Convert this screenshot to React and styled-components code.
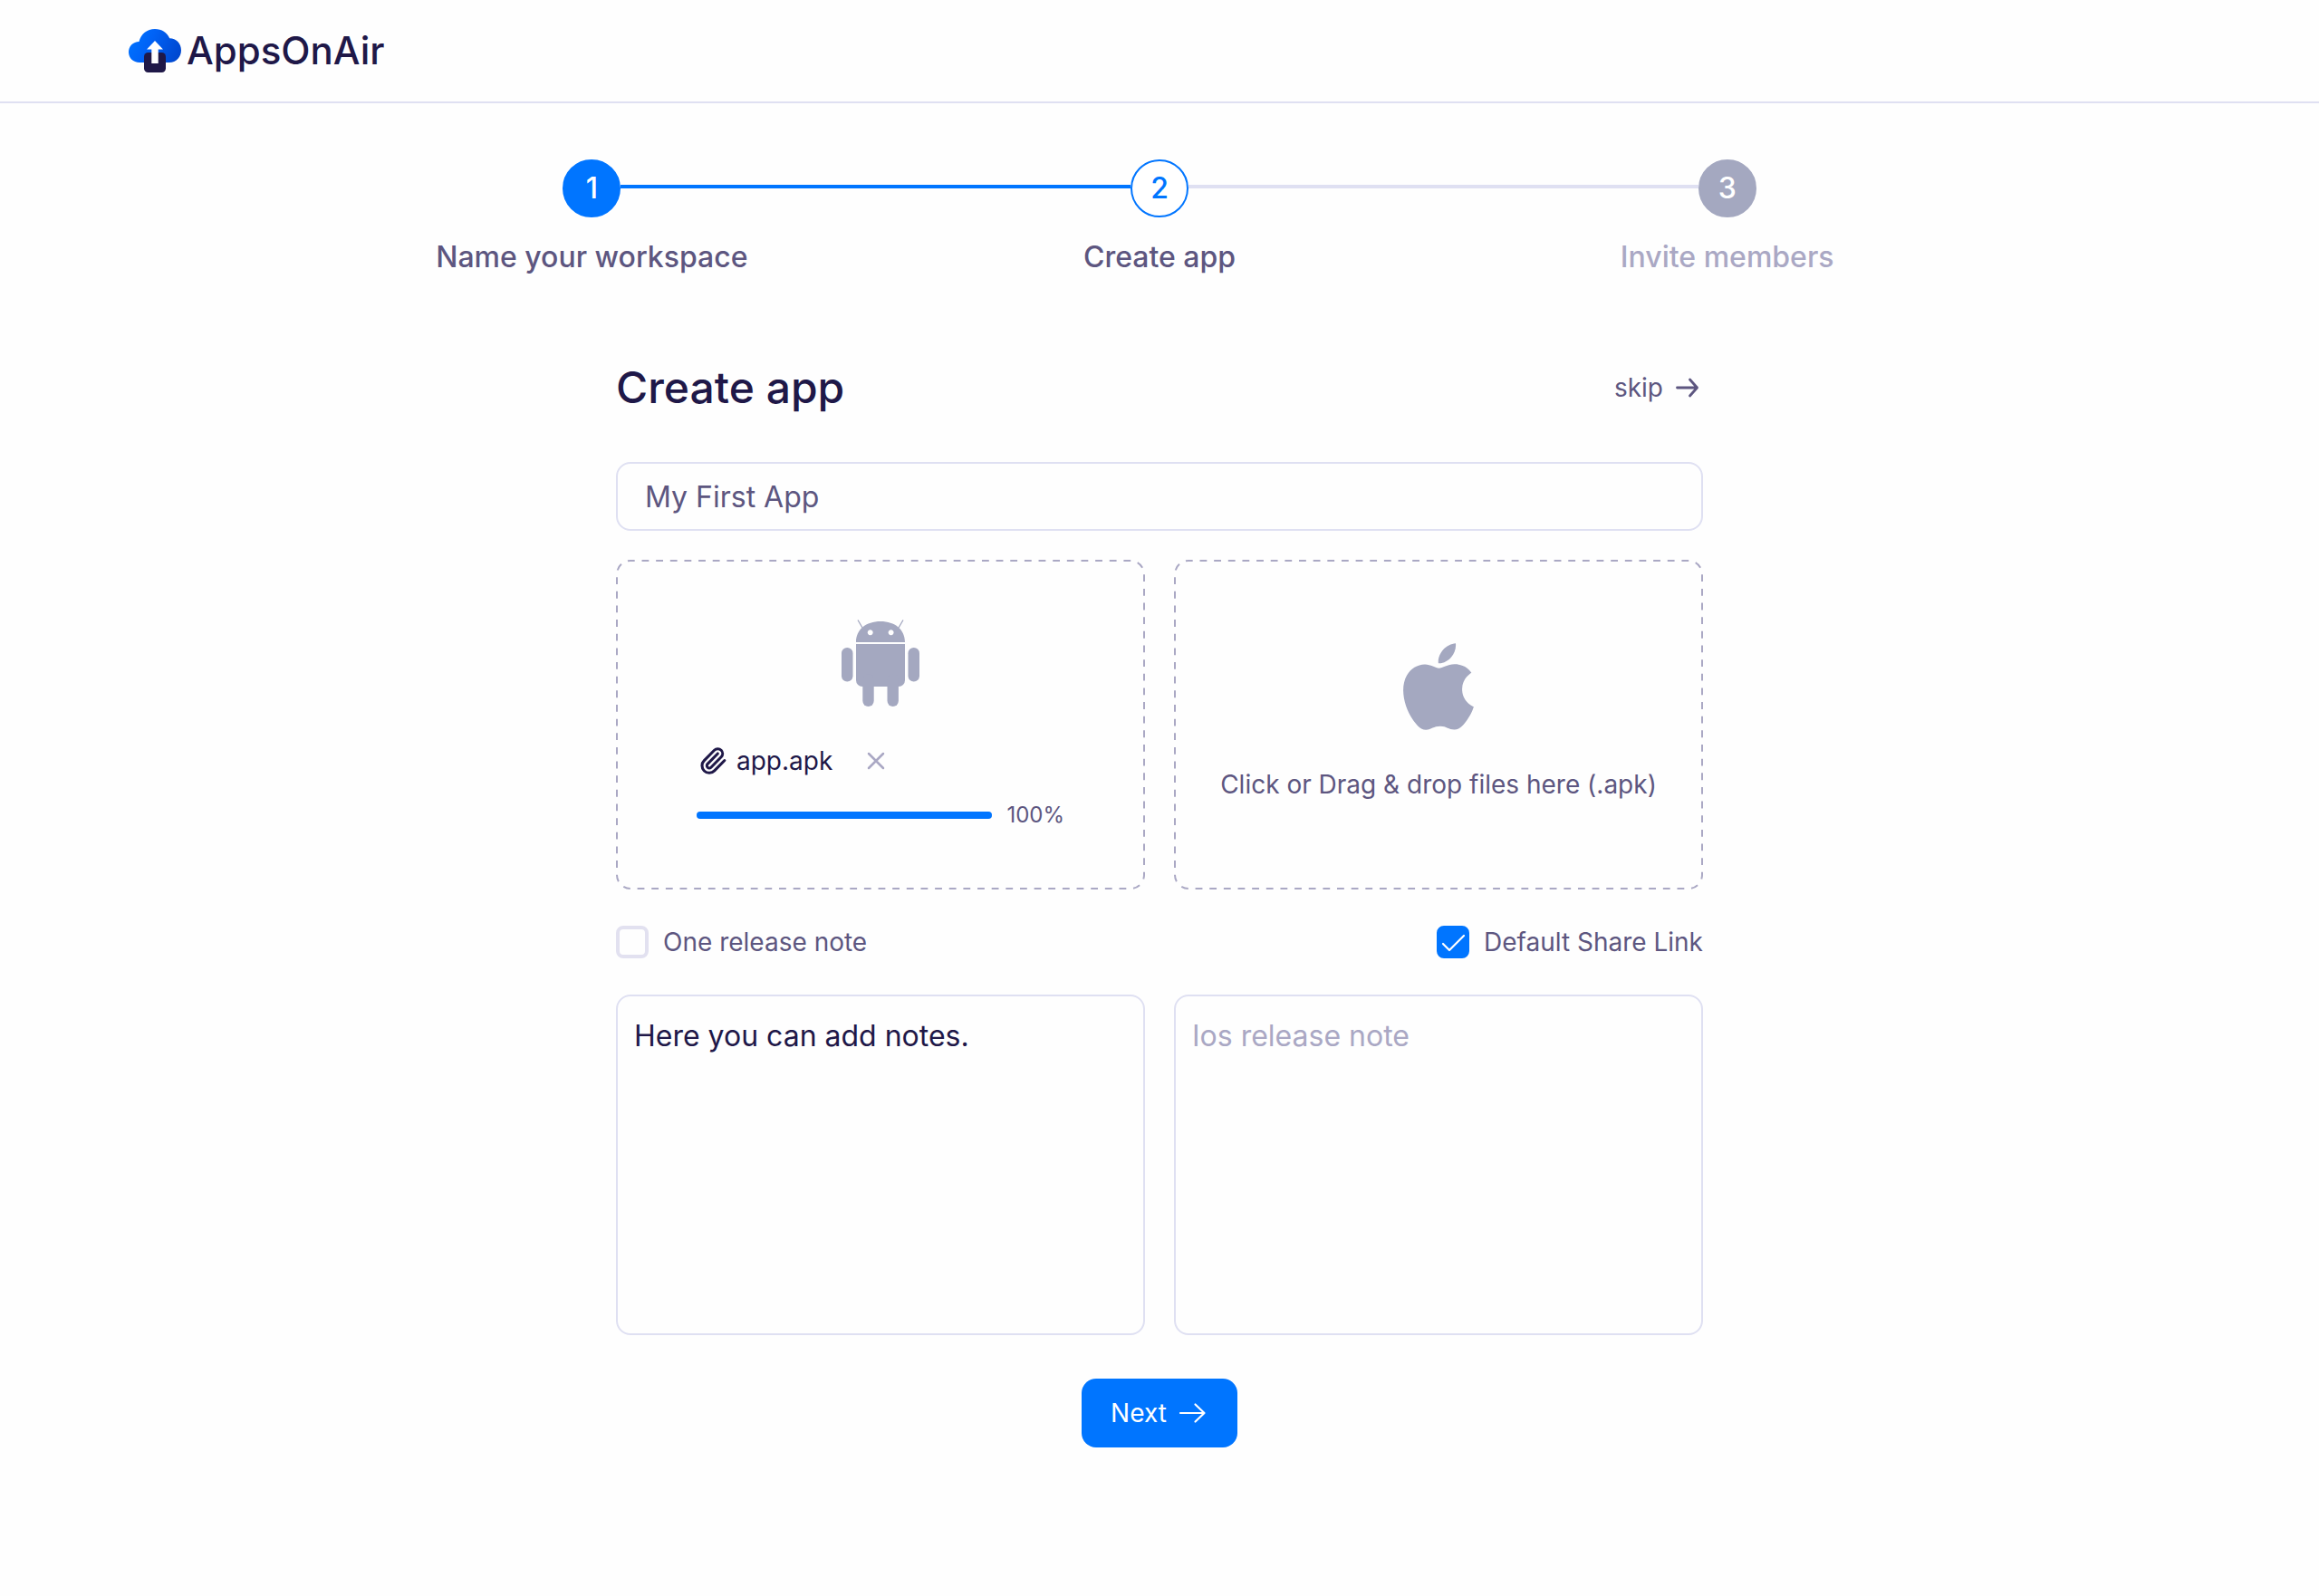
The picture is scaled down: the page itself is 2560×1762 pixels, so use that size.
import React, { useState } from "react";
import styled, { createGlobalStyle } from "styled-components";

const color = {
  page: "#fefefe",
  ink: "#1f1848",
  text: "#5d5680",
  faint: "#aaa8c4",
  grey: "#a4a8c0",
  line: "#dfe0f2",
  blue: "#0075ff",
};

const GlobalStyle = createGlobalStyle`
  *, *::before, *::after { box-sizing: border-box; }
  body {
    margin: 0;
    background: ${color.page};
    color: ${color.text};
    font-family: Inter, "Liberation Sans", sans-serif;
    font-size: 28px;
    line-height: 40px;
  }
  button, input, textarea { font: inherit; color: inherit; }
`;

const Header = styled.header`
  display: flex;
  align-items: center;
  height: 114px;
  padding: 0 142px;
  border-bottom: 2px solid ${color.line};
`;

const Brand = styled.a`
  display: flex;
  align-items: center;
  gap: 6px;
  color: ${color.ink};
  font-size: 42px;
  font-weight: 500;
  text-decoration: none;
`;

const Main = styled.main`
  display: flex;
  flex-direction: column;
  align-items: center;
  padding: 62px 32px;
`;

const Steps = styled.ol`
  display: grid;
  grid-template-columns: repeat(3, 1fr);
  width: 100%;
  max-width: 1880px;
  margin: 0;
  padding: 0;
  list-style: none;
`;

const StepItem = styled.li`
  display: flex;
  flex-direction: column;
  gap: 24px;
  text-align: center;
`;

const StepTrack = styled.div`
  display: flex;
`;

const StepLine = styled.span`
  flex: 1;
  height: 4px;
  margin-top: 28px;
  background: ${(p) => p.$color};
`;

const stepLook = {
  done: { bg: color.blue, fg: "#fff", edge: color.blue, label: color.text },
  current: { bg: "#fff", fg: color.blue, edge: color.blue, label: color.text },
  upcoming: { bg: color.grey, fg: "#fff", edge: color.grey, label: color.faint },
};

const StepCircle = styled.span`
  display: flex;
  align-items: center;
  justify-content: center;
  width: 64px;
  height: 64px;
  border: 2px solid ${(p) => stepLook[p.$state].edge};
  border-radius: 50%;
  background: ${(p) => stepLook[p.$state].bg};
  color: ${(p) => stepLook[p.$state].fg};
  font-size: 32px;
  font-weight: 500;
`;

const StepLabel = styled.span`
  color: ${(p) => stepLook[p.$state].label};
  font-size: 32px;
  font-weight: 500;
`;

const Form = styled.form`
  display: flex;
  flex-direction: column;
  width: 100%;
  max-width: 1200px;
  margin-top: 94px;
`;

const TitleRow = styled.div`
  display: flex;
  align-items: center;
  justify-content: space-between;
  margin-bottom: 52px;
`;

const Title = styled.h1`
  margin: 0;
  color: ${color.ink};
  font-size: 48px;
  font-weight: 500;
  line-height: 60px;
`;

const SkipLink = styled.a`
  display: flex;
  align-items: center;
  gap: 12px;
  color: inherit;
  text-decoration: none;
`;

const NameInput = styled.input`
  width: 100%;
  height: 76px;
  padding: 0 30px;
  border: 2px solid ${color.line};
  border-radius: 16px;
  background: transparent;
  font-size: 32px;
  outline: none;
`;

const Columns = styled.div`
  display: grid;
  grid-template-columns: 1fr 1fr;
  gap: 32px;
`;

const UploadColumns = styled(Columns)`
  margin: 32px 0 40px;
`;

const DropZone = styled.div`
  position: relative;
  display: flex;
  flex-direction: column;
  align-items: center;
  justify-content: center;
  gap: 40px;
  height: 364px;
  padding: ${(p) => (p.$filled ? "4px 0 0" : "0 0 4px")};
`;

const DashedOutline = styled.svg`
  position: absolute;
  inset: 0;
  width: 100%;
  height: 100%;
  pointer-events: none;
  rect {
    x: 1px;
    y: 1px;
    width: calc(100% - 2px);
    height: calc(100% - 2px);
    rx: 15px;
    fill: none;
    stroke: ${color.faint};
    stroke-width: 2px;
  }
`;

const HiddenInput = styled.input`
  position: absolute;
  width: 1px;
  height: 1px;
  opacity: 0;
`;

const UploadedFile = styled.div`
  display: flex;
  flex-direction: column;
  gap: 20px;
  width: 406px;
`;

const FileRow = styled.div`
  display: flex;
  align-items: center;
  padding-left: 2px;
  color: ${color.ink};
`;

const FileName = styled.span`
  margin: 0 34px 0 10px;
`;

const IconButton = styled.button`
  display: flex;
  padding: 4px;
  border: 0;
  background: none;
  color: ${color.faint};
  cursor: pointer;
`;

const ProgressRow = styled.div`
  display: flex;
  align-items: center;
  gap: 16px;
  font-size: 24px;
  line-height: 40px;
`;

const Progress = styled.progress`
  flex: 1;
  height: 8px;
  border: 0;
  appearance: none;
  &::-webkit-progress-bar { background: ${color.line}; border-radius: 4px; }
  &::-webkit-progress-value { background: ${color.blue}; border-radius: 4px; }
`;

const OptionsRow = styled.div`
  display: flex;
  align-items: center;
  justify-content: space-between;
  height: 36px;
  margin-bottom: 40px;
`;

const CheckLabel = styled.label`
  display: flex;
  align-items: center;
  gap: 16px;
`;

const CheckHolder = styled.span`
  display: grid;
  > * { grid-area: 1 / 1; }
  > svg { pointer-events: none; }
`;

const Checkbox = styled.input`
  width: 36px;
  height: 36px;
  margin: 0;
  border: 4px solid #e2e1f0;
  border-radius: 8px;
  appearance: none;
  &:checked { border-color: ${color.blue}; background: ${color.blue}; }
  &:not(:checked) + svg { visibility: hidden; }
`;

const Notes = styled.textarea`
  width: 100%;
  height: 376px;
  padding: 24px 18px;
  border: 2px solid ${color.line};
  border-radius: 16px;
  background: transparent;
  color: ${color.ink};
  font-size: 32px;
  outline: none;
  resize: none;
  &::placeholder { color: ${color.faint}; opacity: 1; }
`;

const NextButton = styled.button`
  display: flex;
  align-items: center;
  align-self: center;
  gap: 12px;
  height: 76px;
  margin-top: 48px;
  padding: 0 32px;
  border: 0;
  border-radius: 16px;
  background: ${color.blue};
  color: #fff;
  cursor: pointer;
`;

function LogoMark() {
  return (
    <svg width="58" height="48" viewBox="0 0 58 48" aria-hidden="true">
      <defs>
        <linearGradient id="cloud" x1="0" y1="0.3" x2="1" y2="0.6">
          <stop offset="0" stopColor="#0072ff" />
          <stop offset="0.4" stopColor="#0062f6" />
          <stop offset="1" stopColor="#0048d0" />
        </linearGradient>
      </defs>
      <path
        d="M12 37C5 37 0 32 0 25.500C0 19 5 14 11.500 14C13.500 5.500 20.500 0 29 0C36.500 0 42.500 4 45.200 10.200C52.500 10.200 58 16 58 23.500C58 31 52.500 37 45 37Z"
        fill="url(#cloud)"
      />
      <rect x="17" y="26" width="24" height="22" rx="4.500" fill={color.ink} />
      <path d="M29 13L38 22.500H32.700V38H25.300V22.500H20Z" fill="#fff" />
    </svg>
  );
}

function AndroidIcon() {
  return (
    <svg width="86" height="96" viewBox="0 0 86 96" fill={color.grey} aria-hidden="true">
      <path d="M18 0.500L23 9M68 0.500L63 9" stroke={color.grey} strokeWidth="1.300" />
      <path
        fillRule="evenodd"
        d="M16 25C16 11 27 2 43 2C59 2 70 11 70 25ZM31.700 11.200a3 3 0 1 0 0.010 0ZM54.600 11.200a3 3 0 1 0 0.010 0Z"
      />
      <path d="M16 27H70V67a7 7 0 0 1-7 7H23a7 7 0 0 1-7-7Z" />
      <rect x="0" y="31" width="12.500" height="37.500" rx="6.200" />
      <rect x="73.500" y="31" width="12.500" height="37.500" rx="6.200" />
      <rect x="23.300" y="60" width="12.400" height="36" rx="6.200" />
      <rect x="50.500" y="60" width="12.400" height="36" rx="6.200" />
    </svg>
  );
}

function AppleIcon() {
  return (
    <svg width="78" height="96" viewBox="2.200 0 19.600 24" fill={color.grey} aria-hidden="true">
      <path d="M12.152 6.896c-.948 0-2.415-1.078-3.960-1.040-2.040.027-3.910 1.183-4.961 3.014-2.117 3.675-.546 9.103 1.519 12.090 1.013 1.454 2.208 3.090 3.792 3.039 1.520-.065 2.090-.987 3.935-.987 1.831 0 2.350.987 3.960.948 1.637-.026 2.676-1.480 3.676-2.948 1.156-1.688 1.636-3.325 1.662-3.415-.039-.013-3.182-1.221-3.220-4.857-.026-3.040 2.480-4.494 2.597-4.559-1.429-2.090-3.623-2.324-4.390-2.376-2-.156-3.675 1.090-4.610 1.090zM15.530 3.830c.843-1.012 1.400-2.427 1.245-3.830-1.207.052-2.662.805-3.532 1.818-.780.896-1.454 2.338-1.273 3.714 1.338.104 2.715-.688 3.559-1.701" />
    </svg>
  );
}

function ClipIcon() {
  return (
    <svg width="32" height="32" viewBox="0 0 24 24" fill="none" stroke="currentColor" strokeWidth="2.300" strokeLinecap="round" strokeLinejoin="round" aria-hidden="true">
      <path d="m16 6-8.414 8.586a2 2 0 0 0 2.829 2.829l8.414-8.586a4 4 0 1 0-5.657-5.657l-8.379 8.551a6 6 0 1 0 8.485 8.485l8.379-8.551" />
    </svg>
  );
}

function CrossIcon() {
  return (
    <svg width="20" height="20" viewBox="0 0 20 20" stroke="currentColor" strokeWidth="2.500" strokeLinecap="round" aria-hidden="true">
      <path d="M2 2L18 18M18 2L2 18" />
    </svg>
  );
}

function SkipArrow() {
  return (
    <svg width="32" height="24" viewBox="0 0 32 24" fill="none" stroke="currentColor" strokeWidth="2.800" strokeLinecap="round" strokeLinejoin="round" aria-hidden="true">
      <path d="M3.500 12H25.500M17.500 3L25.500 12L17.500 21" />
    </svg>
  );
}

function NextArrow() {
  return (
    <svg width="34" height="24" viewBox="0 0 34 24" fill="none" stroke="currentColor" strokeWidth="2.200" strokeLinecap="round" strokeLinejoin="round" aria-hidden="true">
      <path d="M3 12H29.500M19.500 2.500L29.500 12L19.500 21.500" />
    </svg>
  );
}

function CheckMark() {
  return (
    <svg width="36" height="36" viewBox="0 0 36 36" fill="none" stroke="#fff" strokeWidth="2.200" strokeLinecap="round" strokeLinejoin="round" aria-hidden="true">
      <path d="M7 20L14 27L30 11" />
    </svg>
  );
}

function Dashes() {
  return (
    <DashedOutline aria-hidden="true">
      <rect pathLength="238" strokeDasharray="1 1" strokeDashoffset="0.4" />
    </DashedOutline>
  );
}

function Step({ number, label, state, before = "transparent", after = "transparent" }) {
  return (
    <StepItem aria-current={state === "current" ? "step" : undefined}>
      <StepTrack>
        <StepLine $color={before} />
        <StepCircle $state={state}>{number}</StepCircle>
        <StepLine $color={after} />
      </StepTrack>
      <StepLabel $state={state}>{label}</StepLabel>
    </StepItem>
  );
}

function Check({ label, defaultChecked }) {
  return (
    <CheckLabel>
      <CheckHolder>
        <Checkbox type="checkbox" defaultChecked={defaultChecked} />
        <CheckMark />
      </CheckHolder>
      {label}
    </CheckLabel>
  );
}

export default function App() {
  const [name, setName] = useState("My First App");
  return (
    <>
      <GlobalStyle />
      <Header>
        <Brand href="#home">
          <LogoMark />
          AppsOnAir
        </Brand>
      </Header>
      <Main>
        <Steps>
          <Step number="1" label="Name your workspace" state="done" after={color.blue} />
          <Step number="2" label="Create app" state="current" before={color.blue} after={color.line} />
          <Step number="3" label="Invite members" state="upcoming" before={color.line} />
        </Steps>
        <Form onSubmit={(e) => e.preventDefault()}>
          <TitleRow>
            <Title>Create app</Title>
            <SkipLink href="#skip">
              skip
              <SkipArrow />
            </SkipLink>
          </TitleRow>
          <NameInput aria-label="App name" value={name} onChange={(e) => setName(e.target.value)} />
          <UploadColumns>
            <DropZone $filled>
              <Dashes />
              <AndroidIcon />
              <UploadedFile>
                <FileRow>
                  <ClipIcon />
                  <FileName>app.apk</FileName>
                  <IconButton type="button" aria-label="Remove file">
                    <CrossIcon />
                  </IconButton>
                </FileRow>
                <ProgressRow>
                  <Progress value="100" max="100" aria-label="Upload progress" />
                  100%
                </ProgressRow>
              </UploadedFile>
            </DropZone>
            <DropZone as="label">
              <Dashes />
              <HiddenInput type="file" />
              <AppleIcon />
              Click or Drag &amp; drop files here (.apk)
            </DropZone>
          </UploadColumns>
          <OptionsRow>
            <Check label="One release note" />
            <Check label="Default Share Link" defaultChecked />
          </OptionsRow>
          <Columns>
            <Notes aria-label="Android release note" defaultValue="Here you can add notes." />
            <Notes aria-label="Ios release note" placeholder="Ios release note" />
          </Columns>
          <NextButton type="submit">
            Next
            <NextArrow />
          </NextButton>
        </Form>
      </Main>
    </>
  );
}
